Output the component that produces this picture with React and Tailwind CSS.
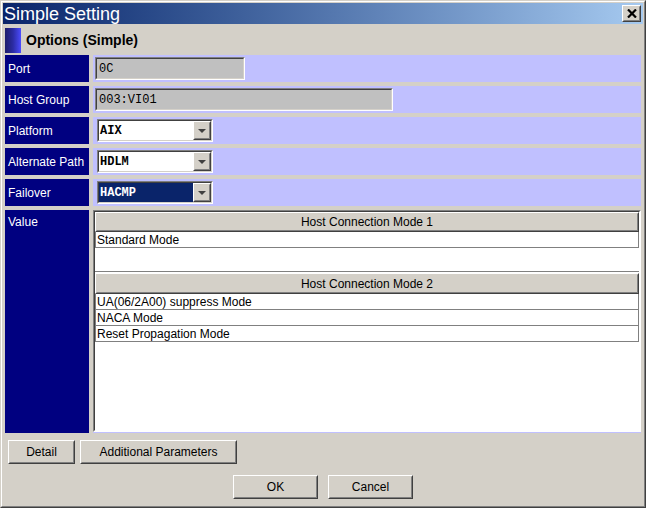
import React from 'react';

const raised = 'border border-t-white border-l-white border-r-[#404040] border-b-[#404040]';
const raisedInner = 'border border-t-[#d4d0c8] border-l-[#d4d0c8] border-r-[#808080] border-b-[#808080]';

const Button = ({ label, width }) => (
  <div className={`${raised} h-[24px] bg-[#d4d0c8]`} style={{ width }}>
    <div className={`${raisedInner} h-full flex items-center justify-center text-[12px] text-black`}>
      {label}
    </div>
  </div>
);

const Sunken = ({ className, innerClass, children }) => (
  <div className={`border border-t-[#808080] border-l-[#808080] border-r-white border-b-white ${className}`}>
    <div className={`border border-t-[#404040] border-l-[#404040] border-r-[#d4d0c8] border-b-[#d4d0c8] h-full ${innerClass}`}>
      {children}
    </div>
  </div>
);

const TextField = ({ value, width }) => (
  <Sunken className={`h-[23px] ${width}`} innerClass="bg-[#c0c0c0] flex items-center pl-[2px]">
    <span className="font-['Liberation_Mono',monospace] text-[12px] text-black">{value}</span>
  </Sunken>
);

const Combo = ({ value, selected }) => (
  <Sunken className="ml-[2px] h-[23px] w-[116px]" innerClass="bg-white flex">
    <div className={`flex-1 flex items-center pl-[1px] ${selected ? 'bg-[#0a246a] text-white' : 'text-black'}`}>
      <span className="font-['Liberation_Mono',monospace] text-[12px] font-bold">{value}</span>
    </div>
    <div className={`${raised} w-[18px] bg-[#d4d0c8]`}>
      <div className={`${raisedInner} h-full flex items-center justify-center`}>
        <svg width="8" height="4" viewBox="0 0 8 4">
          <path d="M0 0 H8 L4 4 Z" fill="#404040" />
        </svg>
      </div>
    </div>
  </Sunken>
);

const Row = ({ label, children }) => (
  <div className="flex gap-[4px] h-[27px]">
    <div className="w-[84px] bg-[#000080] text-white text-[12px] flex items-center pl-[3px]">{label}</div>
    <div className="flex-1 bg-[#c0c0ff] flex items-center pl-[2px]">{children}</div>
  </div>
);

const Header = ({ label, height }) => (
  <div className={`${raised} bg-[#d4d0c8]`} style={{ height }}>
    <div className={`${raisedInner} h-full flex items-center justify-center text-[12px] text-black`}>
      {label}
    </div>
  </div>
);

const Cell = ({ text }) => (
  <div className="h-[16px] border-l border-r border-b border-[#808080] flex items-center pl-[1px] text-[12px] text-black">
    {text}
  </div>
);

export default function App() {
  return (
    <div className="w-[646px] h-[508px] bg-[#d4d0c8] font-['Liberation_Sans',Arial,sans-serif] border border-t-[#d4d0c8] border-l-[#d4d0c8] border-r-[#404040] border-b-[#404040]">
      <div className="h-full border border-t-white border-l-white border-r-[#808080] border-b-[#808080] p-px flex flex-col">
        {/* Title bar */}
        <div className="h-[21px] bg-gradient-to-r from-[#0a246a] to-[#a6caf0] flex items-center justify-between pl-[1px] pr-[2px]">
          <span className="text-white text-[18px] leading-none">Simple Setting</span>
          <div className={`${raised} w-[19px] h-[17px] bg-[#d4d0c8]`}>
            <div className={`${raisedInner} h-full flex items-center justify-center`}>
              <svg width="10" height="9" viewBox="0 0 10 9">
                <path d="M1 0.5 L9 8.5 M9 0.5 L1 8.5" stroke="#000" strokeWidth="2.2" />
              </svg>
            </div>
          </div>
        </div>

        <div className="px-[2px] pt-[4px] flex flex-col">
          {/* Section header */}
          <div className="h-[25px] flex items-center gap-[5px]">
            <div className="w-[16px] h-full bg-gradient-to-r from-[#1c1c6c] via-[#2c2ca4] to-[#4c4cff]" />
            <span className="text-[14px] font-bold text-black">Options (Simple)</span>
          </div>

          <div className="mt-[2px] flex flex-col gap-[4px]">
            <Row label="Port"><TextField value="0C" width="w-[150px]" /></Row>
            <Row label="Host Group"><TextField value="003:VI01" width="w-[298px]" /></Row>
            <Row label="Platform"><Combo value="AIX" /></Row>
            <Row label="Alternate Path"><Combo value="HDLM" /></Row>
            <Row label="Failover"><Combo value="HACMP" selected /></Row>

            <div className="flex gap-[4px] h-[223px]">
              <div className="w-[84px] bg-[#000080] text-white text-[12px] pl-[3px] pt-[3px]">Value</div>
              <div className="flex-1 bg-[#c0c0ff] pb-px">
                <div className="h-full border border-t-[#808080] border-l-[#808080] border-r-white border-b-white">
                  <div className="h-full border border-t-[#404040] border-l-[#404040] border-r-white border-b-white bg-white flex flex-col">
                    <div className="h-[59px]">
                      <Header label="Host Connection Mode 1" height="20px" />
                      <Cell text="Standard Mode" />
                    </div>
                    <div className="flex-1 border-t border-[#808080] pt-px">
                      <Header label="Host Connection Mode 2" height="21px" />
                      <Cell text="UA(06/2A00) suppress Mode" />
                      <Cell text="NACA Mode" />
                      <Cell text="Reset Propagation Mode" />
                    </div>
                  </div>
                </div>
              </div>
            </div>
          </div>

          <div className="mt-[7px] pl-[3px] flex gap-[5px]">
            <Button label="Detail" width="67px" />
            <Button label="Additional Parameters" width="157px" />
          </div>

          <div className="mt-[11px] flex justify-center gap-[10px]">
            <Button label="OK" width="85px" />
            <Button label="Cancel" width="85px" />
          </div>
        </div>
      </div>
    </div>
  );
}
